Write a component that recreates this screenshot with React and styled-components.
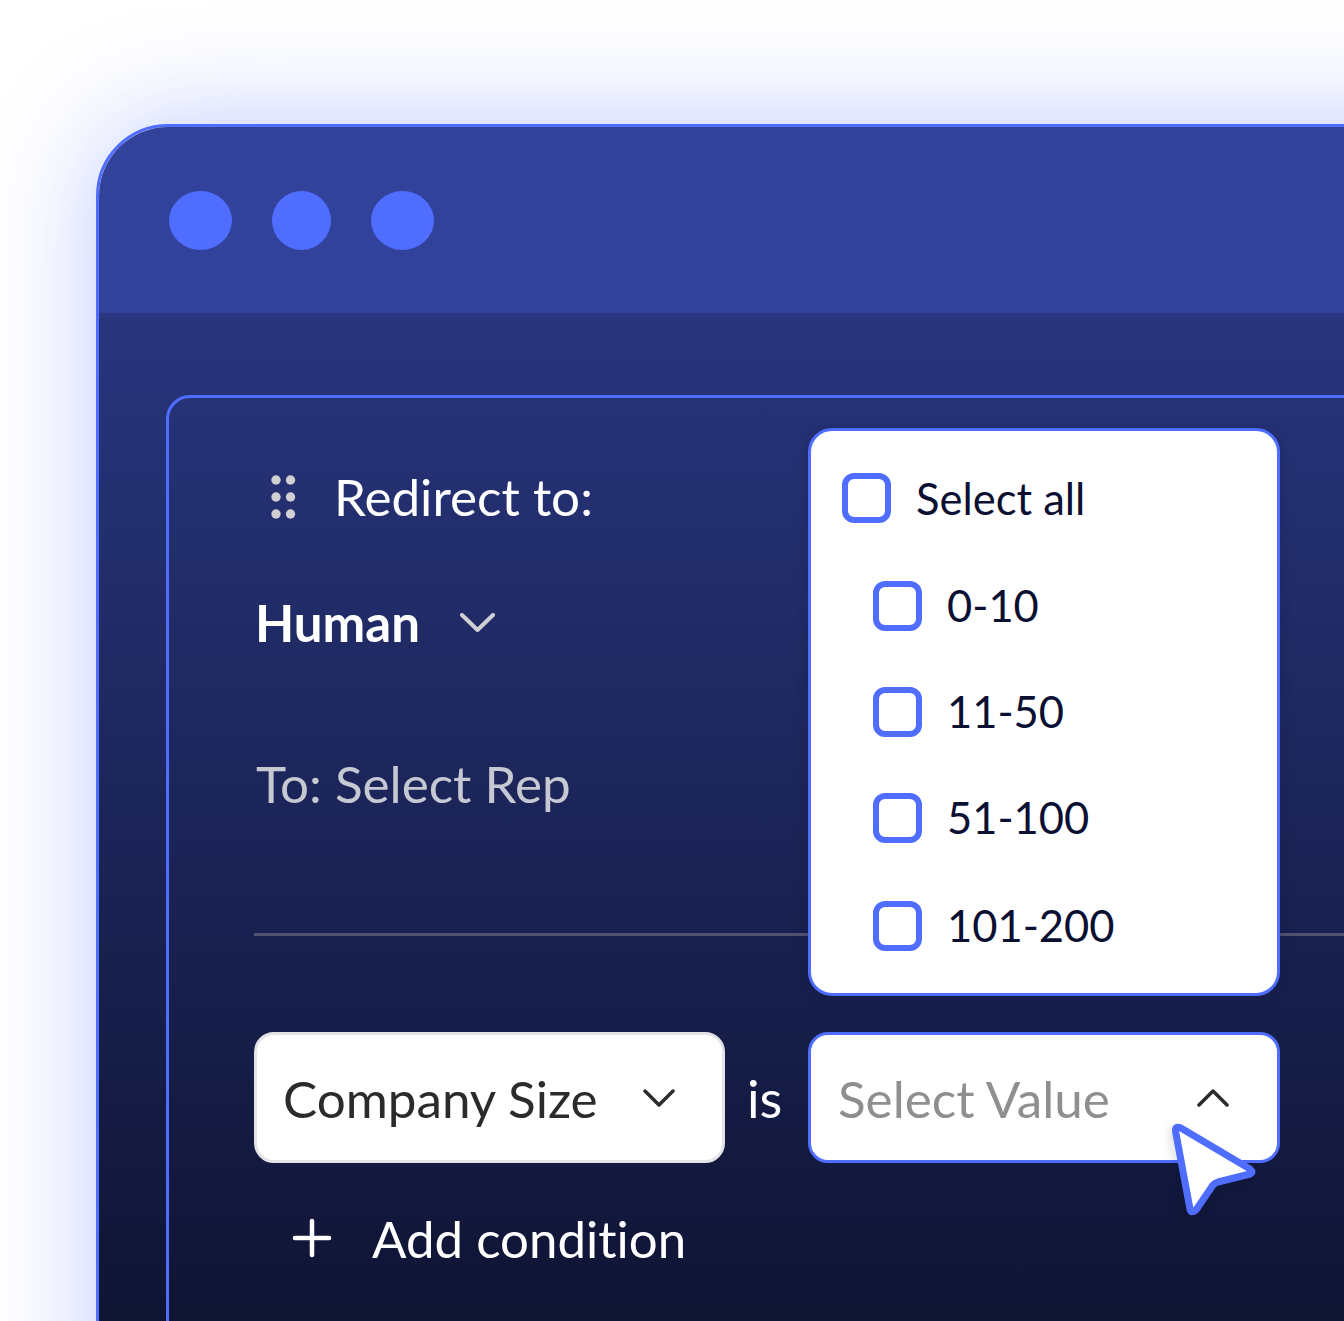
import React from "react";
import styled, { createGlobalStyle } from "styled-components";

const BLUE = "#4f6dff";

const GlobalStyle = createGlobalStyle`
  html, body { margin: 0; padding: 0; background: #fff; }
  body {
    font-family: Lato, "Liberation Sans", sans-serif;
    font-variant-ligatures: none;
  }
`;

const Page = styled.div`
  width: 1344px;
  height: 1321px;
  overflow: hidden;
  padding: 124px 0 0 96px;
  box-sizing: border-box;
`;

const Window = styled.div`
  width: 1400px;
  height: 1300px;
  box-sizing: border-box;
  border: 3px solid ${BLUE};
  border-radius: 72px 0 0 0;
  box-shadow: 0 0 110px rgba(79, 109, 255, 0.36);
  overflow: hidden;
  display: flex;
  flex-direction: column;
`;

const TitleBar = styled.div`
  height: 186px;
  flex: none;
  box-sizing: border-box;
  background: #32429b;
  display: flex;
  align-items: center;
  padding: 0 0 0 70px;
`;

const Dot = styled.span`
  width: ${p => p.$w}px;
  height: 59px;
  margin-right: ${p => p.$gap}px;
  border-radius: 50%;
  background: ${BLUE};
`;

const Body = styled.div`
  flex: 1;
  border-top: 5px solid #2b3780;
  padding: 77px 0 0 67px;
  background: linear-gradient(#28357d 0, #0f1433 1008px);
`;

const Panel = styled.div`
  position: relative;
  height: 1100px;
  box-sizing: border-box;
  border: 3px solid ${BLUE};
  border-radius: 24px 0 0 0;
  padding: 63px 0 0 85px;
`;

const TitleRow = styled.div`
  display: flex;
  align-items: center;
  gap: 38px;
  padding-left: 17px;
  height: 70px;
  font-size: 51.2px;
  color: #fff;

  svg {
    margin-top: 2px;
  }
`;

const ModeRow = styled.div`
  display: flex;
  align-items: center;
  gap: 40px;
  margin-top: 56px;
  padding-left: 1px;
  height: 70px;
  font-size: 51px;
  font-weight: 700;
  color: #fff;
`;

const RepRow = styled.div`
  margin-top: 91px;
  padding-left: 2px;
  height: 70px;
  line-height: 70px;
  font-size: 51.2px;
  color: #c6c8d2;
`;

const Divider = styled.div`
  margin-top: 115px;
  height: 3px;
  background: #4d5270;
`;

const ConditionRow = styled.div`
  display: flex;
  align-items: center;
  margin-top: 96px;
`;

const SelectBox = styled.div`
  width: ${p => p.$w}px;
  height: 131px;
  box-sizing: border-box;
  display: flex;
  align-items: center;
  justify-content: space-between;
  background: #fff;
  border: 3px solid ${p => (p.$active ? BLUE : "#e3e3e8")};
  border-radius: 20px;
  padding: 0 ${p => p.$right}px 0 ${p => p.$left}px;
  font-size: 51.2px;
  color: ${p => (p.$placeholder ? "#8f8f8f" : "#2b2b2b")};
`;

const IsLabel = styled.span`
  width: 83px;
  padding-left: 22px;
  box-sizing: border-box;
  font-size: 52.5px;
  color: #fff;
`;

const AddRow = styled.div`
  display: flex;
  align-items: center;
  gap: 39px;
  margin-top: 45px;
  padding-left: 37px;
  font-size: 51px;
  color: #fff;

  svg {
    margin-top: -2px;
  }
`;

const Dropdown = styled.div`
  position: absolute;
  left: 639px;
  top: 30px;
  width: 472px;
  height: 568px;
  box-sizing: border-box;
  background: #fff;
  border: 3px solid ${BLUE};
  border-radius: 24px;
  padding: 13px 0 0 31px;
  box-shadow: 0 0 12px rgba(15, 20, 60, 0.25);
`;

const Option = styled.div`
  display: flex;
  align-items: center;
  gap: 25px;
  height: ${p => p.$h}px;
  padding-left: ${p => (p.$nested ? 31 : 0)}px;
  font-size: 43.5px;
  color: #0b1033;
`;

const Check = styled.span`
  width: 49px;
  height: 50px;
  margin-top: ${p => (p.$nested ? 2 : 0)}px;
  box-sizing: border-box;
  border: 6px solid ${BLUE};
  border-radius: 12px;
  flex: none;
`;

const Pointer = styled.svg`
  position: absolute;
  left: 1000px;
  top: 724px;
  filter: drop-shadow(-3px 3px 5px rgba(0, 0, 0, 0.12));
`;

const Chevron = ({ up, color = "#2b2b2b", w = 32, h = 18, sw = 3.5 }) => (
  <svg width={w} height={h} viewBox={`0 0 ${w} ${h}`} fill="none">
    <path
      d={
        up
          ? `M2 ${h - 2}L${w / 2} 2L${w - 2} ${h - 2}`
          : `M2 2L${w / 2} ${h - 2}L${w - 2} 2`
      }
      stroke={color}
      strokeWidth={sw}
      strokeLinecap="round"
      strokeLinejoin="round"
    />
  </svg>
);

const GripDots = () => (
  <svg width="25" height="44" viewBox="0 0 25 44" fill="#cfcfd4">
    {[5, 22, 39].map(y =>
      [5, 19.5].map(x => <circle key={`${x}-${y}`} cx={x} cy={y} r="4.7" />)
    )}
  </svg>
);

const options = [
  { label: "0-10", h: 106 },
  { label: "11-50", h: 106 },
  { label: "51-100", h: 106 },
  { label: "101-200", h: 109 }
];

export default function App() {
  return (
    <>
      <GlobalStyle />
      <Page>
        <Window>
          <TitleBar>
            <Dot $w={63} $gap={40} />
            <Dot $w={59} $gap={40} />
            <Dot $w={63} $gap={0} />
          </TitleBar>
          <Body>
            <Panel>
              <TitleRow>
                <GripDots />
                <span>Redirect to:</span>
              </TitleRow>
              <ModeRow>
                <span>Human</span>
                <Chevron color="#cfcfd4" w={35} h={19} sw={4} />
              </ModeRow>
              <RepRow>To: Select Rep</RepRow>
              <Divider />
              <ConditionRow>
                <SelectBox $w={471} $left={26} $right={47}>
                  <span>Company Size</span>
                  <Chevron />
                </SelectBox>
                <IsLabel>is</IsLabel>
                <SelectBox $w={472} $left={27} $right={48} $active $placeholder>
                  <span>Select Value</span>
                  <Chevron up />
                </SelectBox>
              </ConditionRow>
              <AddRow>
                <svg width="42" height="42" viewBox="0 0 42 42" fill="none">
                  <path
                    d="M21 4V38M4 21H38"
                    stroke="#fff"
                    strokeWidth="4.5"
                    strokeLinecap="round"
                  />
                </svg>
                <span>Add condition</span>
              </AddRow>
              <Dropdown>
                <Option $h={108}>
                  <Check />
                  <span>Select all</span>
                </Option>
                {options.map(o => (
                  <Option key={o.label} $nested $h={o.h}>
                    <Check $nested />
                    <span>{o.label}</span>
                  </Option>
                ))}
              </Dropdown>
              <Pointer width="90" height="100" viewBox="0 0 90 100" fill="none">
                <path
                  d="M6.5 9Q6 4 11 5.5L81 47Q85 50 81 52L49 60Q46 61 44 63L27 88Q22 92 21 87Z"
                  fill="#fff"
                  stroke={BLUE}
                  strokeWidth="7"
                  strokeLinejoin="round"
                />
              </Pointer>
            </Panel>
          </Body>
        </Window>
      </Page>
    </>
  );
}
